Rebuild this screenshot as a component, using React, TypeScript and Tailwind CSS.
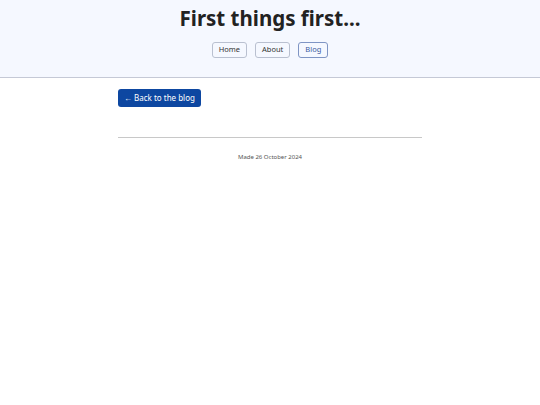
import React from 'react';

const NavLink = ({ label, active }: { label: string; active?: boolean }) => (
  <a
    href="#"
    className={
      'flex h-[16px] items-center rounded-[3px] border px-[6px] text-[7.5px] leading-none ' +
      (active ? 'border-[#7f95c4] text-[#3b5aa0]' : 'border-[#b9c0d0] text-[#333]')
    }
  >
    {label}
  </a>
);

export default function App() {
  return (
    <div className="min-h-screen bg-white font-['Noto_Sans',sans-serif] text-[#222]">
      <header className="flex h-[78px] flex-col items-center border-b border-[#c5c9d6] bg-[#f5f8ff] pt-[4px]">
        <h1 className="text-[20.5px] font-bold leading-[28px] text-[#222]">First things first...</h1>
        <nav className="mt-[10px] flex gap-[8px]">
          <NavLink label="Home" />
          <NavLink label="About" />
          <NavLink label="Blog" active />
        </nav>
      </header>
      <main className="mx-auto flex w-[304px] flex-col pt-[11px]">
        <a
          href="#"
          className="flex h-[18px] w-fit items-center rounded-[3px] bg-[#0d47a1] px-[6px] text-[8px] leading-none text-white"
        >
          ← Back to the blog
        </a>
        <hr className="mt-[30px] border-t border-[#c8c8c8]" />
        <p className="mt-[14px] text-center text-[6px] leading-[10px] text-[#555]">Made 26 October 2024</p>
      </main>
    </div>
  );
}
